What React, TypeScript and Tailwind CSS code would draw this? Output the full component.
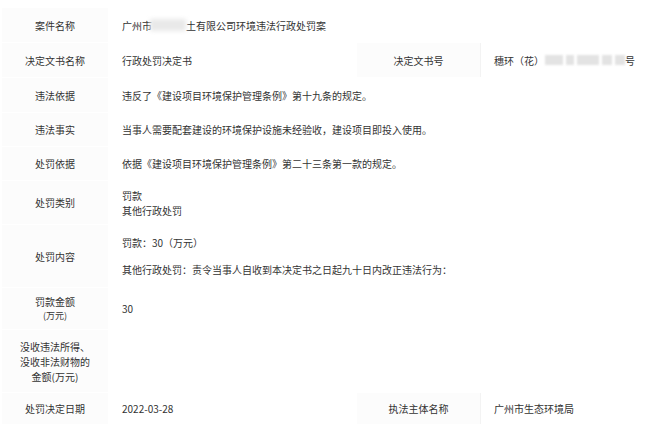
import React from "react";

const font = { fontFamily: '"Noto Sans CJK SC", "Noto Sans", sans-serif' };

function Label({ children, className = "" }: { children: React.ReactNode; className?: string }) {
  return (
    <div className={`w-[106px] shrink-0 flex flex-col items-center justify-center text-center bg-[#fcfcfc] text-[#333] ${className}`}>
      {children}
    </div>
  );
}

function Value({ children, className = "" }: { children: React.ReactNode; className?: string }) {
  return <div className={`flex-1 flex flex-col justify-center pl-[12px] text-[#333] ${className}`}>{children}</div>;
}

function Row({ label, children, h }: { label: React.ReactNode; children: React.ReactNode; h: string }) {
  return (
    <div className={`flex gap-[2px] ${h}`}>
      <Label>{label}</Label>
      <Value>{children}</Value>
    </div>
  );
}

function Blur({ w }: { w: string }) {
  return <span className={`inline-block h-[10px] align-middle bg-[#e3e3e3] blur-[1px] ${w}`} />;
}

export default function App() {
  return (
    <div className="w-[650px] h-[431px] bg-white pt-[8px] pl-[2px] text-[10px] leading-[15px] overflow-hidden" style={font}>
      <div className="flex flex-col gap-[1px]">
        <Row label="案件名称" h="h-[34px]">
          <div className="flex items-center">
            <span>广州市</span>
            <span className="inline-block w-[36px] h-[12px] bg-[#e9e9e9] blur-[2px] -ml-[2px]" />
            <span>土有限公司环境违法行政处罚案</span>
          </div>
        </Row>

        <div className="flex gap-[2px] h-[34px]">
          <Label>决定文书名称</Label>
          <Value className="w-[245px] flex-none">行政处罚决定书</Value>
          <div className="w-[124px] shrink-0 flex items-center justify-center bg-[#fcfcfc] text-[#333] border-r border-[#f3f3f3]">
            决定文书号
          </div>
          <div className="flex-1 flex items-center pl-[11px] text-[#333]">
            <span>穗环（花）</span>
            <span className="flex items-center gap-[3px] ml-[1px]">
              <Blur w="w-[18px]" />
              <Blur w="w-[8px]" />
              <Blur w="w-[22px]" />
              <Blur w="w-[10px]" />
              <Blur w="w-[10px]" />
            </span>
            <span>号</span>
          </div>
        </div>

        <Row label="违法依据" h="h-[34px]">
          违反了《建设项目环境保护管理条例》第十九条的规定。
        </Row>

        <Row label="违法事实" h="h-[33px]">
          当事人需要配套建设的环境保护设施未经验收，建设项目即投入使用。
        </Row>

        <Row label="处罚依据" h="h-[33px]">
          依据《建设项目环境保护管理条例》第二十三条第一款的规定。
        </Row>

        <Row label="处罚类别" h="h-[43px]">
          <div>罚款</div>
          <div>其他行政处罚</div>
        </Row>

        <Row label="处罚内容" h="h-[62px]">
          <div>罚款：30（万元）</div>
          <div className="mt-[12px]">其他行政处罚：责令当事人自收到本决定书之日起九十日内改正违法行为：</div>
        </Row>

        <Row
          label={
            <>
              <div>罚款金额</div>
              <div className="text-[9px] leading-[14px]">(万元)</div>
            </>
          }
          h="h-[41px]"
        >
          30
        </Row>

        <Row
          label={
            <>
              <div>没收违法所得、</div>
              <div>没收非法财物的</div>
              <div>金额(万元)</div>
            </>
          }
          h="h-[62px]"
        >
          {""}
        </Row>

        <div className="flex gap-[2px] h-[31px]">
          <Label>处罚决定日期</Label>
          <Value className="w-[245px] flex-none">2022-03-28</Value>
          <div className="w-[124px] shrink-0 flex items-center justify-center bg-[#fcfcfc] text-[#333] border-r border-[#f3f3f3]">
            执法主体名称
          </div>
          <div className="flex-1 flex items-center pl-[11px] text-[#333]">广州市生态环境局</div>
        </div>
      </div>
    </div>
  );
}
